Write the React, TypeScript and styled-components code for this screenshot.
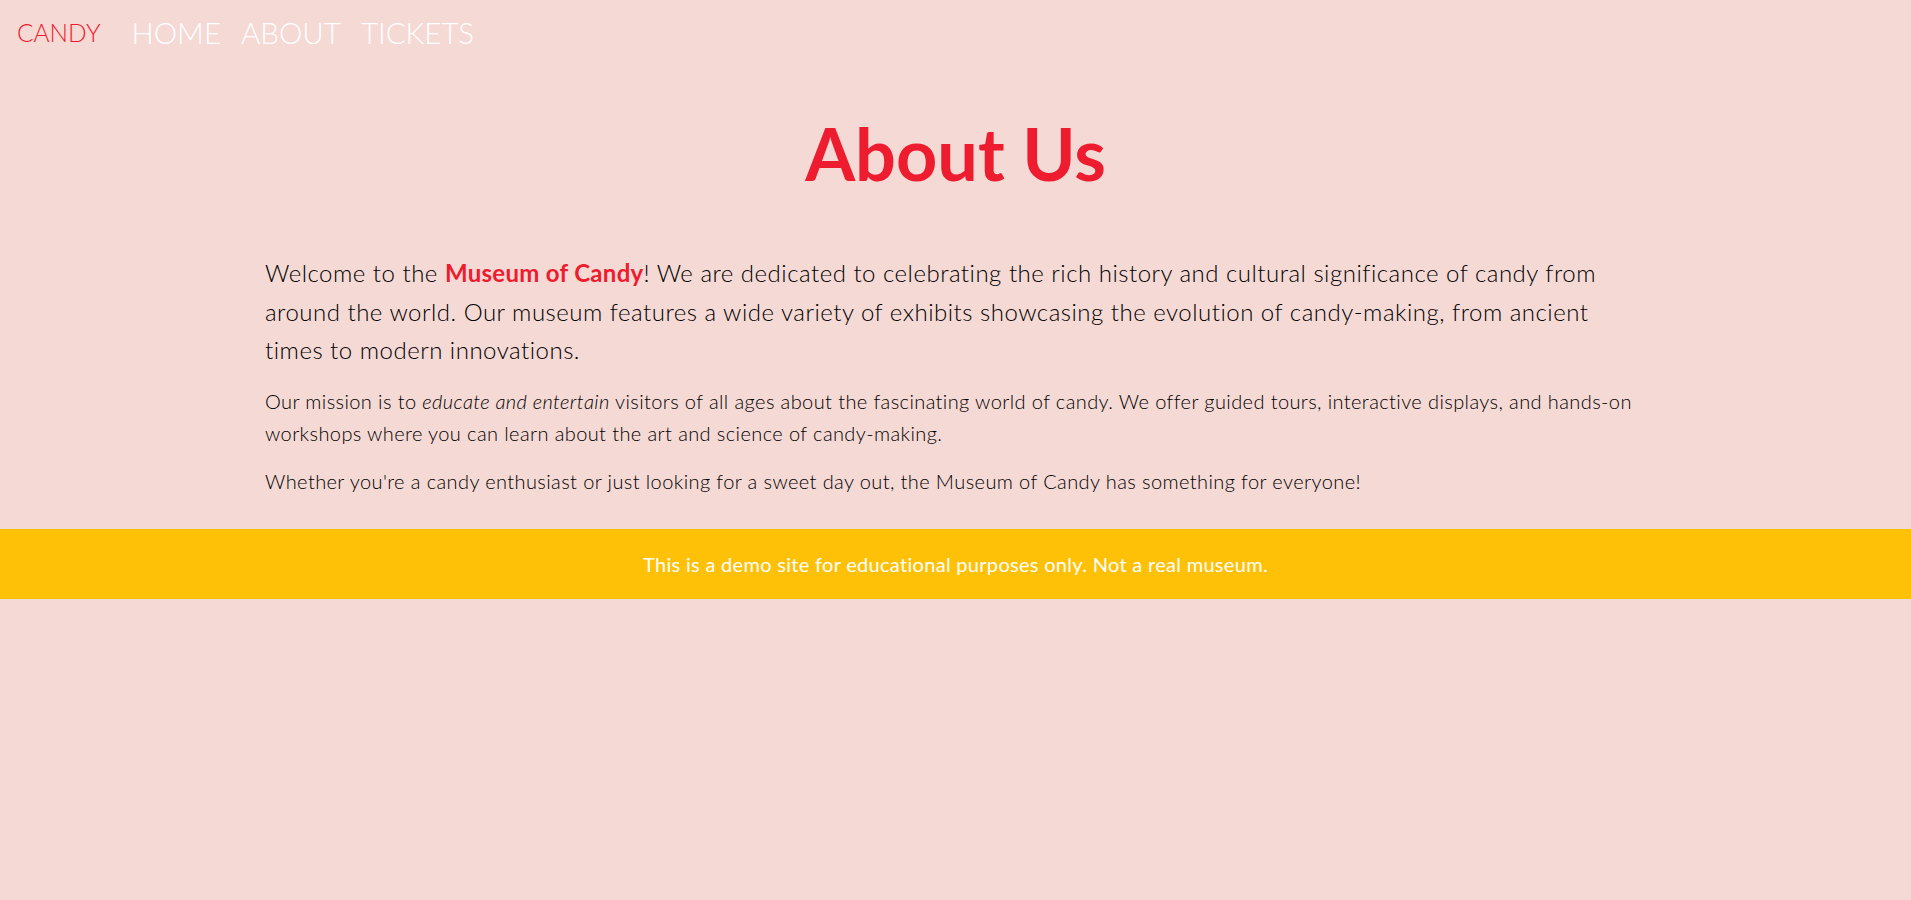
import React from "react";
import styled, { createGlobalStyle } from "styled-components";

const GlobalStyle = createGlobalStyle`
  html, body {
    margin: 0;
    padding: 0;
    background: #f5d9d5;
  }
  body {
    font-family: Lato, "Noto Sans", "Liberation Sans", sans-serif;
    font-size: 20px;
    line-height: 1.6;
    color: #212529;
  }
  * { box-sizing: border-box; }
`;

const Page = styled.div`
  min-height: 900px;
  background: #f5d9d5;
`;

const NavBar = styled.nav`
  display: flex;
  align-items: center;
  height: 66px;
  padding: 0 17px;
`;

const Brand = styled.a`
  font-size: 24.5px;
  font-weight: 300;
  color: #ed1c2e;
  text-decoration: none;
  margin-right: 31px;
`;

const NavLinks = styled.div`
  display: flex;
  align-items: center;
  gap: 20px;
`;

const NavLink = styled.a`
  font-size: 29.5px;
  font-weight: 300;
  color: #ffffff;
  text-decoration: none;
`;

const Main = styled.main`
  max-width: 1405px;
  margin: 0 auto;
  padding: 0 12px 16px;
`;

const Title = styled.h1`
  margin: 44px 0 58px;
  text-align: center;
  font-size: 72px;
  font-weight: 700;
  line-height: 1.2;
  color: #ed1c2e;
`;

const Lead = styled.p`
  margin: 0 0 15px;
  font-size: 24px;
  font-weight: 300;
  line-height: 1.6;
  letter-spacing: 0.5px;
  color: #000000;
`;

const Paragraph = styled.p`
  margin: 0 0 16px;
  font-size: 20px;
  font-weight: 300;
  line-height: 1.6;
  letter-spacing: 0.4px;
  color: #000000;
`;

const Highlight = styled.strong`
  color: #ed1c2e;
  font-weight: 700;
  letter-spacing: 0.3px;
`;

const Footer = styled.footer`
  background: #ffc107;
  color: #ffffff;
  text-align: center;
  padding: 19px 12px;
  font-size: 20px;
  font-weight: 400;
  line-height: 32px;
  letter-spacing: 0.3px;
`;

export default function App() {
  return (
    <Page>
      <GlobalStyle />
      <NavBar>
        <Brand href="#">CANDY</Brand>
        <NavLinks>
          <NavLink href="#">HOME</NavLink>
          <NavLink href="#">ABOUT</NavLink>
          <NavLink href="#">TICKETS</NavLink>
        </NavLinks>
      </NavBar>
      <Main>
        <Title>About Us</Title>
        <Lead>
          Welcome to the <Highlight>Museum of Candy</Highlight>! We are dedicated to
          celebrating the rich history and cultural significance of candy from around
          the world. Our museum features a wide variety of exhibits showcasing the
          evolution of candy-making, from ancient times to modern innovations.
        </Lead>
        <Paragraph>
          Our mission is to <em>educate and entertain</em> visitors of all ages about the
          fascinating world of candy. We offer guided tours, interactive displays, and
          hands-on workshops where you can learn about the art and science of
          candy-making.
        </Paragraph>
        <Paragraph>
          Whether you're a candy enthusiast or just looking for a sweet day out, the
          Museum of Candy has something for everyone!
        </Paragraph>
      </Main>
      <Footer>This is a demo site for educational purposes only. Not a real museum.</Footer>
    </Page>
  );
}
